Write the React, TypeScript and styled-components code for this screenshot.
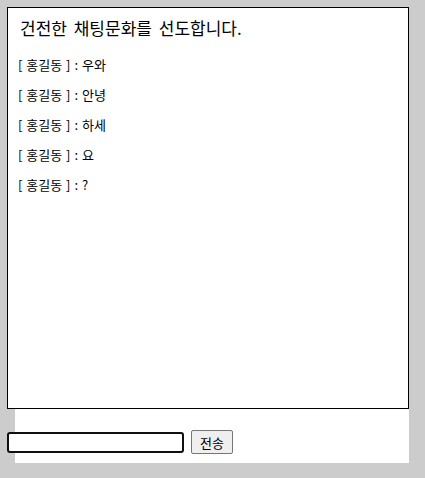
import styled, { createGlobalStyle } from 'styled-components';

const GlobalStyle = createGlobalStyle`
  html, body {
    margin: 0;
    padding: 0;
    background: #cccccc;
    font-family: "Noto Sans CJK KR", "Noto Sans", sans-serif;
  }
`;

const Panel = styled.div`
  display: flow-root;
  margin: 15px 0 0 15px;
  width: 394px;
  height: 448px;
  background: #ffffff;
`;

const ChatBox = styled.div`
  box-sizing: border-box;
  margin: -8px 0 0 -8px;
  width: 402px;
  height: 402px;
  border: 1px solid #000000;
  background: #ffffff;
  padding: 8px 10px;
`;

const Title = styled.div`
  font-size: 17px;
  line-height: 24px;
  word-spacing: 3px;
  color: #000000;
  padding-left: 2px;
  margin-bottom: 16px;
`;

const Message = styled.div`
  font-size: 13px;
  line-height: 18px;
  word-spacing: 1px;
  color: #000000;
  margin-bottom: 12px;
`;

const Form = styled.form`
  display: flex;
  align-items: center;
  gap: 7px;
  margin: 21px 0 0 -8px;
`;

const Input = styled.input`
  box-sizing: border-box;
  width: 177px;
  height: 21px;
  border: 2px solid #101010;
  border-radius: 3px;
  background: #ffffff;
  padding: 0 2px;
  outline: none;
`;

const Button = styled.button`
  box-sizing: border-box;
  height: 24px;
  width: 42px;
  padding: 0;
  border: 1px solid #767676;
  border-radius: 2px;
  background: #efefef;
  font-family: "Noto Sans CJK KR", sans-serif;
  font-size: 13px;
  color: #000000;
`;

const messages = ['우와', '안녕', '하세', '요', '?'];

export default function App() {
  return (
    <>
      <GlobalStyle />
      <Panel>
        <ChatBox>
          <Title>건전한 채팅문화를 선도합니다.</Title>
          {messages.map((m, i) => (
            <Message key={i}>[ 홍길동 ] : {m}</Message>
          ))}
        </ChatBox>
        <Form onSubmit={(e) => e.preventDefault()}>
          <Input type="text" />
          <Button type="submit">전송</Button>
        </Form>
      </Panel>
    </>
  );
}
